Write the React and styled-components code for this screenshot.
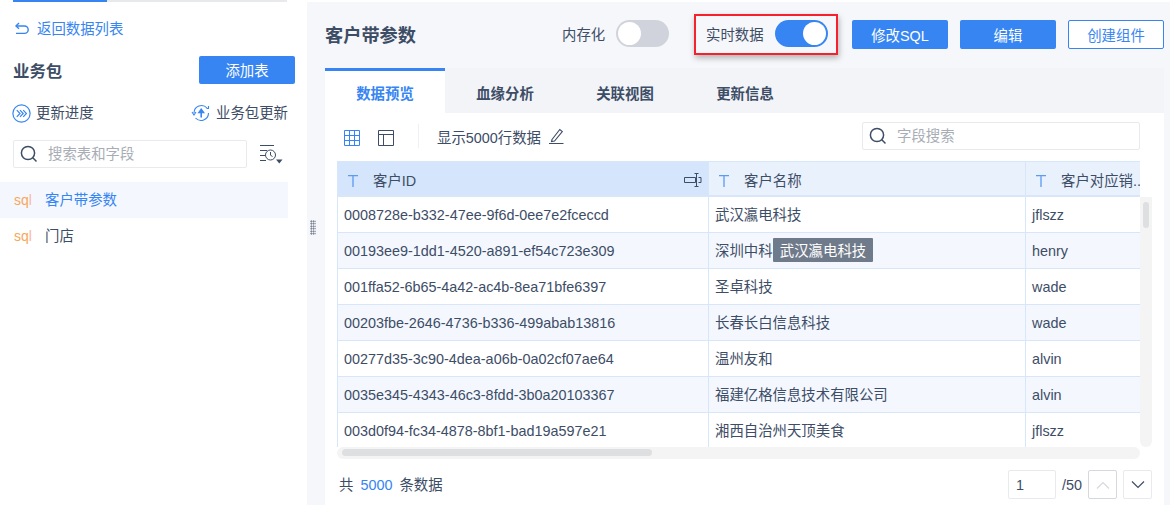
import React from "react";
import styled, { createGlobalStyle } from "styled-components";

const Global = createGlobalStyle`
  html, body { margin: 0; padding: 0; background: #fff; }
  * { box-sizing: border-box; }
  body {
    font-family: "Liberation Sans", "Noto Sans CJK SC", sans-serif;
    font-size: 14.4px;
    color: #3d4d66;
  }
`;

const Page = styled.div`
  width: 1170px;
  height: 505px;
  display: flex;
  overflow: hidden;
  background: #fff;
`;

// nudges CJK text up a pixel or two inside a centered flex row
const Txt = styled.span`
  padding-bottom: ${(p) => p.$lift || 2}px;
  white-space: nowrap;
`;

/* sidebar */
const Side = styled.aside`
  width: 307px;
  flex: none;
`;
const TopLine = styled.div`
  width: 274px;
  height: 2px;
  margin-left: 13px;
  background: linear-gradient(to right, #3685f2 94px, #e8e9ec 94px);
`;
const Back = styled.div`
  height: 20px;
  margin: 17px 0 0 14px;
  display: flex;
  align-items: center;
  gap: 7px;
  color: #3685f2;
`;
const PackRow = styled.div`
  width: 282px;
  height: 28px;
  margin: 17px 0 0 13px;
  display: flex;
  align-items: center;
  justify-content: space-between;
`;
const PackTitle = styled.div`
  font-size: 16.4px;
  font-weight: 700;
`;
const PrimaryBtn = styled.button`
  width: 96px;
  height: 29px;
  padding: 0;
  border: 0;
  border-radius: 2px;
  background: #3685f2;
  color: #fff;
  font: inherit;
`;
const AddBtn = styled(PrimaryBtn)`
  height: 28px;
  padding-bottom: 2px;
`;
const UpdateRow = styled.div`
  width: 276px;
  height: 20px;
  margin: 19px 0 0 12px;
  display: flex;
  justify-content: space-between;
`;
const UpdateItem = styled.div`
  display: flex;
  align-items: center;
  gap: 5px;
  white-space: nowrap;
`;
const SearchRow = styled.div`
  height: 28px;
  margin: 17px 0 0 13px;
  display: flex;
  align-items: center;
  gap: 12px;
`;
const SearchBox = styled.div`
  width: ${(p) => p.$w}px;
  height: 28px;
  padding-left: 6px;
  display: flex;
  align-items: center;
  gap: 10px;
  background: #fff;
  border: 1px solid #e8eaed;
  border-radius: 2px;
  color: #a8adb5;
`;
const TableList = styled.div`
  margin-top: 14px;
  width: 288px;
`;
const TableItem = styled.div`
  height: 36px;
  padding-left: 14px;
  display: flex;
  align-items: center;
  gap: 14px;
  background: ${(p) => (p.$active ? "#f4f8fe" : "transparent")};
  color: ${(p) => (p.$active ? "#3685f2" : "#3d4d66")};
`;
const SqlMark = styled.span`
  width: 17px;
  font-size: 14px;
  line-height: 12px;
  color: #f9a65a;
  white-space: nowrap;
`;
const SqlEnd = styled.span`
  color: #fbb8a0;
`;

/* main */
const Main = styled.main`
  flex: 1;
  margin-top: 2px;
  padding-left: 18px;
  padding-right: 6px;
  background: #f6f7fa;
  position: relative;
  display: flex;
  flex-direction: column;
`;
const Grip = styled.div`
  position: absolute;
  left: 3px;
  top: 218px;
  width: 6px;
  height: 15px;
  background-image: radial-gradient(#5a6577 0.8px, transparent 0.9px);
  background-size: 2.5px 2.5px;
`;
const Header = styled.header`
  height: 66px;
  display: flex;
  align-items: flex-start;
`;
const Title = styled.h1`
  margin: 22px 0 0;
  width: 237px;
  font-size: 18.2px;
  line-height: 24px;
  font-weight: 700;
`;
const SwitchWrap = styled.div`
  display: flex;
  align-items: center;
  gap: 11px;
  white-space: nowrap;
`;
const Memo = styled(SwitchWrap)`
  width: 108px;
  margin-top: 18px;
  height: 27px;
`;
const Highlight = styled(SwitchWrap)`
  width: 144px;
  height: 41px;
  margin: 12px 14px 0 24px;
  padding: 0 8px 2px 10px;
  border: 2px solid #f5222d;
  box-shadow: 1px 3px 6px rgba(0, 0, 0, 0.28);
`;
const Switch = styled.div`
  width: 53px;
  height: 27px;
  flex: none;
  padding: 2px;
  display: flex;
  justify-content: ${(p) => (p.$on ? "flex-end" : "flex-start")};
  border-radius: 14px;
  background: ${(p) => (p.$on ? "#3685f2" : "#d0d3db")};
`;
const Knob = styled.div`
  width: 23px;
  height: 23px;
  border-radius: 50%;
  background: #fff;
`;
const HeadBtns = styled.div`
  margin-top: 18px;
  display: flex;
  gap: 12px;
`;
const OutlineBtn = styled(PrimaryBtn)`
  border: 1px solid #3685f2;
  background: #fff;
  color: #3685f2;
`;
const Tabs = styled.nav`
  height: 45px;
  display: flex;
  background: #f2f4f8;
`;
const Tab = styled.div`
  width: 120px;
  border-top: 3px solid ${(p) => (p.$active ? "#3685f2" : "transparent")};
  background: ${(p) => (p.$active ? "#fff" : "transparent")};
  color: ${(p) => (p.$active ? "#3685f2" : "#3d4d66")};
  display: flex;
  align-items: center;
  justify-content: center;
  font-weight: 700;
`;
const Panel = styled.section`
  flex: 1;
  background: #fff;
  padding: 9px 12px 0;
  position: relative;
`;
const Toolbar = styled.div`
  height: 28px;
  width: 803px;
  display: flex;
  align-items: center;
`;
const ToolIcon = styled.span`
  display: flex;
  margin: 4px 0 0 ${(p) => p.$ml || 0}px;
`;
const Divider = styled.span`
  width: 1px;
  height: 24px;
  margin: 0 18px 0 24px;
  background: #eff0f3;
`;
const RowLimit = styled.div`
  display: flex;
  align-items: center;
  gap: 8px;
  flex: 1;
  white-space: nowrap;
`;
const TableArea = styled.div`
  margin-top: 11px;
  width: 815px;
  display: grid;
  grid-template-columns: 803px 12px;
`;
const TableClip = styled.div`
  width: 803px;
  height: 286px;
  overflow: hidden;
  position: relative;
`;
const Grid = styled.div`
  display: grid;
  grid-template-columns: 372px 317px 114px;
`;
const HeadCell = styled.div`
  height: 36px;
  padding: 2px 0 0 10px;
  display: flex;
  align-items: center;
  gap: 15px;
  background: ${(p) => (p.$sel ? "#d5e5fb" : "#e9f1fd")};
  border: 1px solid #d8e6fa;
  border-right-width: ${(p) => (p.$end ? 0 : 1)}px;
  border-left-width: ${(p) => (p.$first ? 1 : 0)}px;
  border-bottom: 2px solid #d8e6fa;
  white-space: nowrap;
  position: relative;
`;
const TypeIcon = styled.svg`
  flex: none;
  margin-top: 2px;
`;
const Cell = styled.div`
  height: 36px;
  padding-left: 6px;
  display: flex;
  align-items: center;
  background: ${(p) => (p.$odd ? "#f4f8fe" : "#fff")};
  border-right: ${(p) => (p.$end ? 0 : 1)}px solid #d8e6fa;
  border-left: ${(p) => (p.$first ? 1 : 0)}px solid #d8e6fa;
  border-bottom: 1px solid #d8e6fa;
  white-space: nowrap;
  overflow: hidden;
`;
const ResizeMark = styled.span`
  position: absolute;
  right: 6px;
  top: 11px;
  display: flex;
`;
const VTrack = styled.div`
  height: 250px;
  margin-top: 36px;
  padding: 5px 3px;
  background: #f4f4f5;
  border-radius: 0 0 6px 6px;
`;
const VThumb = styled.div`
  height: 26px;
  border-radius: 4px;
  background: #dedfe1;
`;
const HTrack = styled.div`
  width: 803px;
  height: 12px;
  padding: 2px 5px;
  background: #f4f4f5;
  border-radius: 6px;
`;
const HThumb = styled.div`
  width: 310px;
  height: 7px;
  border-radius: 4px;
  background: #dedfe1;
`;
const Tooltip = styled.div`
  position: absolute;
  left: 436px;
  top: 77px;
  width: 100px;
  height: 24px;
  padding-bottom: 1px;
  display: flex;
  align-items: center;
  justify-content: center;
  background: #6f7a8a;
  border-radius: 1px;
  color: #fff;
  white-space: nowrap;
`;
const Footer = styled.footer`
  width: 815px;
  height: 29px;
  margin-top: 11px;
  padding-left: 2px;
  display: flex;
  align-items: center;
`;
const Total = styled.div`
  flex: 1;
  display: flex;
  align-items: baseline;
  gap: 7px;
  padding-bottom: 2px;
`;
const Count = styled.span`
  color: #3685f2;
`;
const PageInput = styled.div`
  width: 48px;
  height: 29px;
  padding-left: 7px;
  display: flex;
  align-items: center;
  border: 1px solid #e8eaed;
  border-radius: 2px;
`;
const PageTotal = styled.span`
  margin: 0 6px;
`;
const PageBtn = styled.div`
  width: 29px;
  height: 29px;
  margin-left: ${(p) => p.$ml || 0}px;
  display: flex;
  align-items: center;
  justify-content: center;
  border: 1px solid ${(p) => (p.$dim ? "#d5d8de" : "#e8eaed")};
  border-radius: 2px;
`;

/* icons */
const BackIcon = () => (
  <svg width="16" height="14" viewBox="0 0 16 14" fill="none" stroke="#3685f2" strokeWidth="1.4">
    <path d="M5 1 2 4l3 2.8" />
    <path d="M2 4h8.5a3.6 3.6 0 0 1 0 7.4H2" />
  </svg>
);
const ProgressIcon = () => (
  <svg width="19" height="19" viewBox="0 0 19 19" fill="none" stroke="#3685f2" strokeWidth="1.2">
    <circle cx="9.5" cy="9.5" r="8.6" />
    <path d="M4.8 6.2 8 9.5l-3.2 3.300M8 6.200l3.200 3.300L8 12.800M11.200 6.200l3.200 3.300-3.200 3.300" />
  </svg>
);
const PackUpdateIcon = () => (
  <svg width="20" height="18" viewBox="0 0 20 18" fill="none" stroke="#3685f2" strokeWidth="1.1">
    <path d="M3 9a7.500 7.500 0 0 1 13-5M17.500 9a7.500 7.500 0 0 1-13 5" />
    <path d="m1 8 2 3 2-3M15.500 4.500h2V2" />
    <path d="M10.200 13.500V7" strokeWidth="1.600" />
    <path d="M7.500 8.800 10.200 5l2.700 3.800z" fill="#3685f2" />
  </svg>
);
const SearchIcon = () => (
  <svg width="18" height="18" viewBox="0 0 18 18" fill="none" stroke="#3d4d66" strokeWidth="1.500">
    <circle cx="8" cy="8" r="6.600" />
    <path d="m12.800 12.800 3.700 3.700" />
  </svg>
);
const HistoryIcon = () => (
  <svg width="24" height="22" viewBox="0 0 24 22" fill="none" stroke="#3d4d66" strokeWidth="1">
    <path d="M1 2.500h14M1 7.500h7M1 12.500h5M1 17.500h6" />
    <circle cx="11.500" cy="12" r="5" />
    <path d="M11.500 9v3.200l2 1.300" />
    <path d="M17 16.500h6.500l-3.250 4z" fill="#3d4d66" stroke="none" />
  </svg>
);
const GridIcon = () => (
  <svg width="16" height="16" viewBox="0 0 16 16" fill="none" stroke="#3685f2" strokeWidth="1">
    <path d="M.5.500h15v15H.5zM5.500.500v15M10.500.500v15M.5 5.500h15M.5 10.500h15" />
  </svg>
);
const LayoutIcon = () => (
  <svg width="16" height="16" viewBox="0 0 16 16" fill="none" stroke="#3d4d66" strokeWidth="1">
    <path d="M.5.500h15v15H.5zM.5 4.500h15M5.500 4.500v11" />
  </svg>
);
const PenIcon = () => (
  <svg width="15" height="16" viewBox="0 0 15 16" fill="none" stroke="#3d4d66" strokeWidth="1.100">
    <path d="M3 11.500 10.800 1.500l2.500 2L5.500 13l-3 .6zM0 15.500h14.500" />
  </svg>
);
const ResizeIcon = () => (
  <svg width="18" height="14" viewBox="0 0 18 14" fill="none" stroke="#3d4d66" strokeWidth="1">
    <path d="M.5 4.500h11v5H.5zM12.500 .5v13M10.500 .5h4M10.500 13.500h4M14.500 4.500h2.500v5h-2.500" />
  </svg>
);
const TextType = () => (
  <TypeIcon width="10" height="12" viewBox="0 0 10 12" fill="none" stroke="#5b9bf3" strokeWidth="1.300">
    <path d="M0 .7h10M5 .7V12" />
  </TypeIcon>
);
const Chevron = ({ up }) => (
  <svg width="14" height="8" viewBox="0 0 14 8" fill="none" stroke={up ? "#d5d8de" : "#3d4d66"} strokeWidth="1.200">
    <path d={up ? "M1 7.500 7 1.500l6 6" : "M1 .5l6 6 6-6"} />
  </svg>
);

const rows = [
  ["0008728e-b332-47ee-9f6d-0ee7e2fceccd", "武汉瀛电科技", "jflszz"],
  ["00193ee9-1dd1-4520-a891-ef54c723e309", "深圳中科", "henry"],
  ["001ffa52-6b65-4a42-ac4b-8ea71bfe6397", "圣卓科技", "wade"],
  ["00203fbe-2646-4736-b336-499abab13816", "长春长白信息科技", "wade"],
  ["00277d35-3c90-4dea-a06b-0a02cf07ae64", "温州友和", "alvin"],
  ["0035e345-4343-46c3-8fdd-3b0a20103367", "福建亿格信息技术有限公司", "alvin"],
  ["003d0f94-fc34-4878-8bf1-bad19a597e21", "湘西自治州天顶美食", "jflszz"],
];

export default function App() {
  return (
    <Page>
      <Global />
      <Side>
        <TopLine />
        <Back>
          <BackIcon />
          <Txt $lift={4}>返回数据列表</Txt>
        </Back>
        <PackRow>
          <PackTitle>业务包</PackTitle>
          <AddBtn>添加表</AddBtn>
        </PackRow>
        <UpdateRow>
          <UpdateItem>
            <ProgressIcon />
            <Txt $lift={4}>更新进度</Txt>
          </UpdateItem>
          <UpdateItem>
            <PackUpdateIcon />
            <Txt $lift={4}>业务包更新</Txt>
          </UpdateItem>
        </UpdateRow>
        <SearchRow>
          <SearchBox $w={234}>
            <SearchIcon />
            <Txt $lift={4}>搜索表和字段</Txt>
          </SearchBox>
          <HistoryIcon />
        </SearchRow>
        <TableList>
          <TableItem $active>
            <SqlMark>sq<SqlEnd>l</SqlEnd></SqlMark>
            <Txt $lift={4}>客户带参数</Txt>
          </TableItem>
          <TableItem>
            <SqlMark>sq<SqlEnd>l</SqlEnd></SqlMark>
            <Txt $lift={4}>门店</Txt>
          </TableItem>
        </TableList>
      </Side>
      <Main>
        <Grip />
        <Header>
          <Title>客户带参数</Title>
          <Memo>
            内存化
            <Switch>
              <Knob />
            </Switch>
          </Memo>
          <Highlight>
            实时数据
            <Switch $on>
              <Knob />
            </Switch>
          </Highlight>
          <HeadBtns>
            <PrimaryBtn>修改SQL</PrimaryBtn>
            <PrimaryBtn>编辑</PrimaryBtn>
            <OutlineBtn>创建组件</OutlineBtn>
          </HeadBtns>
        </Header>
        <Tabs>
          <Tab $active>数据预览</Tab>
          <Tab>血缘分析</Tab>
          <Tab>关联视图</Tab>
          <Tab>更新信息</Tab>
        </Tabs>
        <Panel>
          <Toolbar>
            <ToolIcon $ml={7}>
              <GridIcon />
            </ToolIcon>
            <ToolIcon $ml={18}>
              <LayoutIcon />
            </ToolIcon>
            <Divider />
            <RowLimit>
              显示5000行数据
              <PenIcon />
            </RowLimit>
            <SearchBox $w={278}>
              <SearchIcon />
              <Txt $lift={4}>字段搜索</Txt>
            </SearchBox>
          </Toolbar>
          <TableArea>
            <TableClip>
              <Grid>
                <HeadCell $sel $first>
                  <TextType />
                  客户ID
                  <ResizeMark>
                    <ResizeIcon />
                  </ResizeMark>
                </HeadCell>
                <HeadCell>
                  <TextType />
                  客户名称
                </HeadCell>
                <HeadCell $end>
                  <TextType />
                  客户对应销...
                </HeadCell>
                {rows.map((r, i) => (
                  <React.Fragment key={r[0]}>
                    <Cell $first $odd={i % 2 === 1}>{r[0]}</Cell>
                    <Cell $odd={i % 2 === 1}><Txt>{r[1]}</Txt></Cell>
                    <Cell $end $odd={i % 2 === 1}>{r[2]}</Cell>
                  </React.Fragment>
                ))}
              </Grid>
              <Tooltip>武汉瀛电科技</Tooltip>
            </TableClip>
            <VTrack>
              <VThumb />
            </VTrack>
            <HTrack>
              <HThumb />
            </HTrack>
          </TableArea>
          <Footer>
            <Total>
              <span>共</span>
              <Count>5000</Count>
              <span>条数据</span>
            </Total>
            <PageInput>1</PageInput>
            <PageTotal>/50</PageTotal>
            <PageBtn $dim>
              <Chevron up />
            </PageBtn>
            <PageBtn $ml={6}>
              <Chevron />
            </PageBtn>
          </Footer>
        </Panel>
      </Main>
    </Page>
  );
}
